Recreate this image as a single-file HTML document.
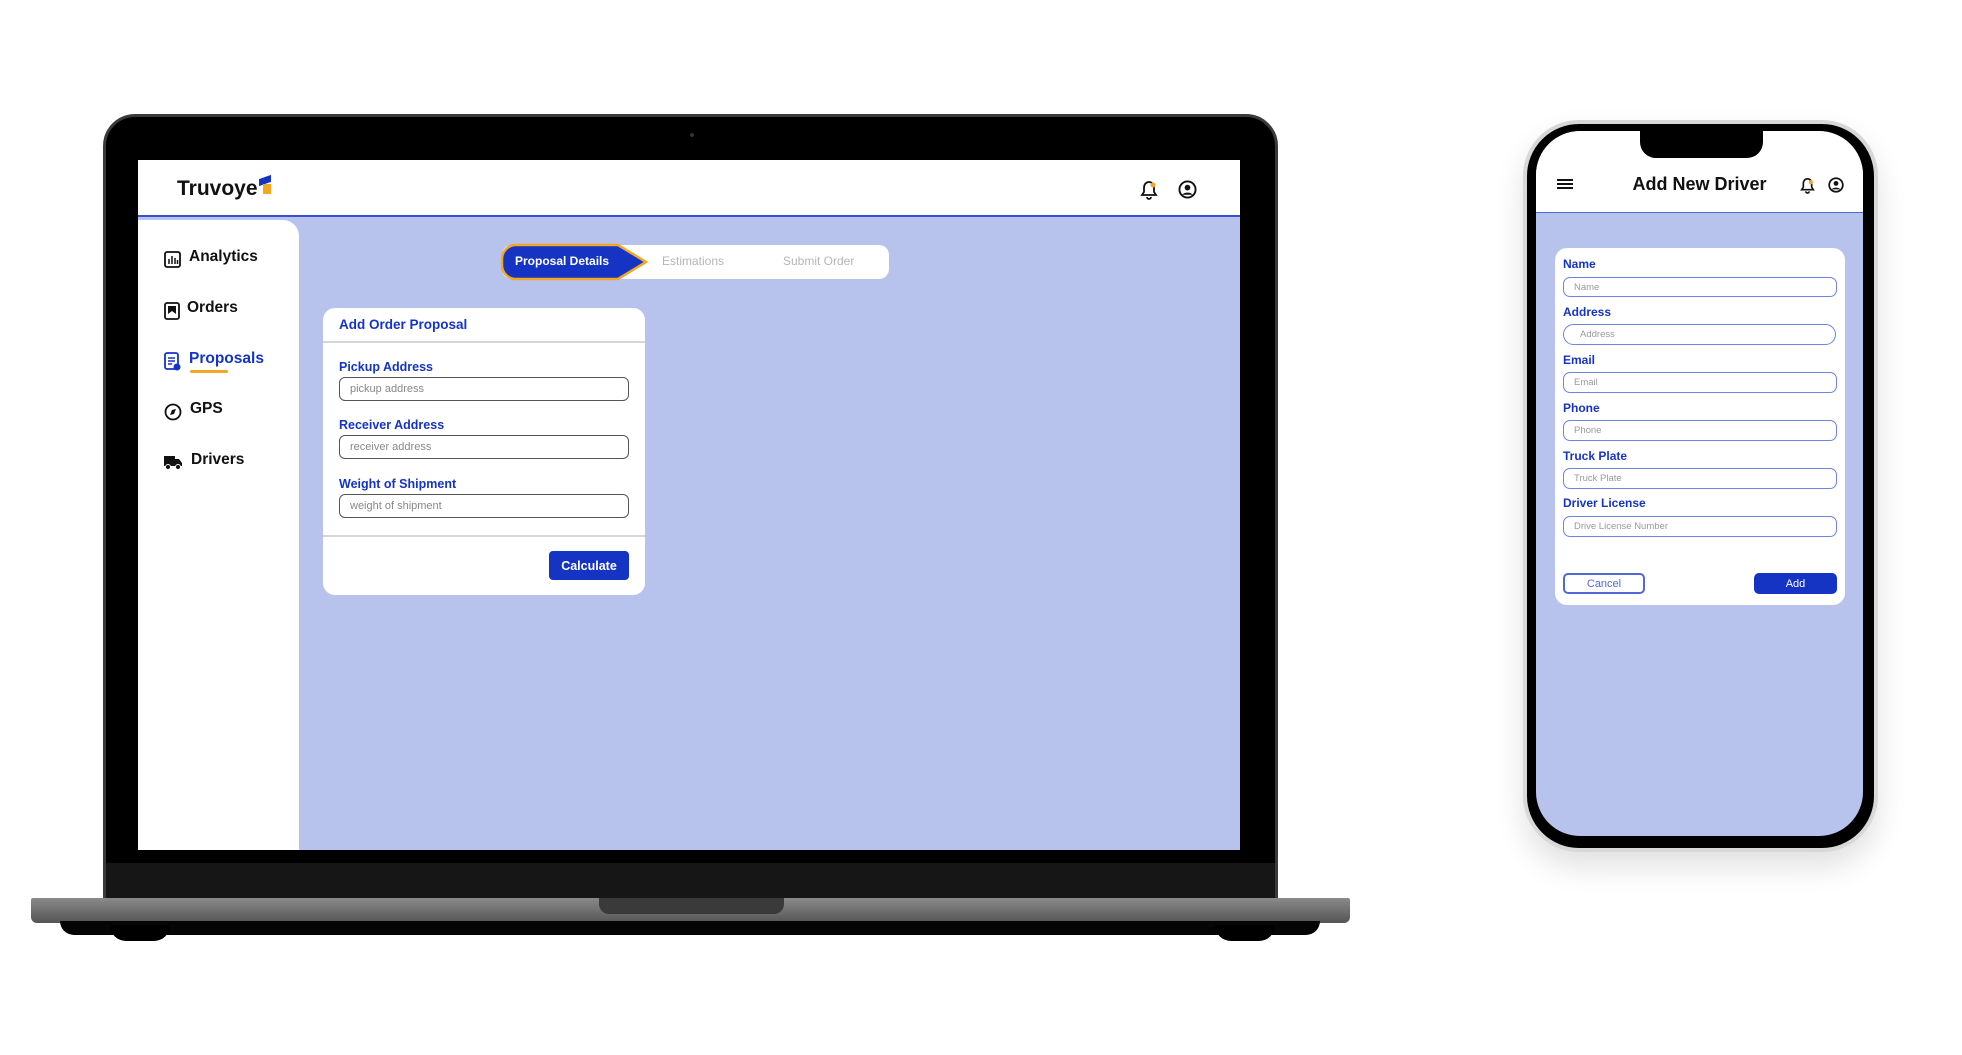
<!DOCTYPE html>
<html><head><meta charset="utf-8"><style>
*{box-sizing:border-box;margin:0;padding:0}
body{width:1962px;height:1055px;background:#fff;position:relative;overflow:hidden;font-family:"Liberation Sans",sans-serif}
.a{position:absolute}
.lbl{color:#1534c4;font-weight:bold;font-size:12.5px}
.inp{border:1.5px solid #555;border-radius:6px;font-size:11px;color:#888;padding-left:10px;display:flex;align-items:center;background:#fff}
.pl{color:#1534c4;font-weight:bold;font-size:12px}
.pi{border:1.5px solid #6f83e0;border-radius:7px;font-size:9.5px;color:#999;padding-left:10px;display:flex;align-items:center;background:#fff}
.nav{font-size:15.5px;font-weight:bold;color:#111}
</style></head><body>
<!-- laptop -->
<div class="a" style="left:103px;top:114px;width:1175px;height:795px;background:#000;border-radius:32px 32px 0 0;border:3px solid #3a3a3a"></div>
<div class="a" style="left:106px;top:863px;width:1169px;height:35px;background:#161616"></div>
<div class="a" style="left:690px;top:133px;width:4px;height:4px;border-radius:50%;background:#333"></div>
<div class="a" style="left:31px;top:898px;width:1319px;height:25px;background:linear-gradient(#8a8a8a,#6a6a6a 60%,#555);border-radius:2px 2px 6px 6px"></div>
<div class="a" style="left:599px;top:898px;width:185px;height:16px;background:#3a3a3a;border-radius:0 0 10px 10px"></div>
<div class="a" style="left:60px;top:921px;width:1260px;height:14px;background:#050505;border-radius:0 0 30px 30px"></div>
<div class="a" style="left:110px;top:925px;width:60px;height:16px;background:#000;border-radius:0 0 30px 30px"></div>
<div class="a" style="left:1215px;top:925px;width:60px;height:16px;background:#000;border-radius:0 0 30px 30px"></div>
<!-- screen -->
<div class="a" style="left:138px;top:160px;width:1102px;height:690px;background:#b7c3ec;overflow:hidden">
  <div class="a" style="left:0;top:0;width:1102px;height:57px;background:#fff;border-bottom:2px solid #3550d0"></div>
  <div class="a" style="left:39px;top:17px;font-size:21px;font-weight:bold;color:#111;white-space:nowrap">Truvoye<span style="display:inline-block;position:relative;width:14px;height:16px;vertical-align:top"><span style="position:absolute;left:1px;top:0;width:12px;height:7px;background:#1534c4;transform:skewY(-20deg)"></span><span style="position:absolute;left:5px;top:7px;width:8px;height:10px;background:#f5a623"></span></span></div>
  <svg class="a" style="left:1002px;top:20px" width="18" height="20" viewBox="0 0 18 20"><path d="M9 2c-3 0-5 2.5-5 5.5V12l-2 3h14l-2-3V7.5C14 4.5 12 2 9 2zM7 17a2 2 0 0 0 4 0" fill="none" stroke="#111" stroke-width="1.8"/><circle cx="13" cy="5" r="2.5" fill="#f5a623"/></svg>
  <svg class="a" style="left:1040px;top:20px" width="19" height="19" viewBox="0 0 20 20"><circle cx="10" cy="10" r="8.5" fill="none" stroke="#111" stroke-width="2"/><circle cx="10" cy="8" r="3" fill="#111"/><path d="M4.5 15.5c2-3 9-3 11 0" fill="#111"/></svg>
  <div class="a" style="left:0;top:60px;width:161px;height:640px;background:#fff;border-radius:0 16px 0 0"></div>
  <svg class="a" style="left:26px;top:91px" width="17" height="17"><rect x="1" y="1" width="15" height="15" rx="2" fill="none" stroke="#111" stroke-width="1.8"/><path d="M5 13V8M8 13V5M11 13V7M13.5 13V9" stroke="#111" stroke-width="1.5"/></svg>
  <div class="a nav" style="left:51px;top:88px">Analytics</div>
  <svg class="a" style="left:26px;top:142px" width="16" height="18"><rect x="1" y="1" width="14" height="16" rx="2" fill="none" stroke="#111" stroke-width="1.8"/><path d="M4 4h8v8l-4-3-4 3z" fill="#111"/></svg>
  <div class="a nav" style="left:49px;top:139px">Orders</div>
  <svg class="a" style="left:26px;top:192px" width="17" height="19"><rect x="1" y="1" width="13" height="16" rx="2" fill="none" stroke="#1534c4" stroke-width="1.8"/><path d="M4 6h7M4 9h7M4 12h4" stroke="#1534c4" stroke-width="1.5"/><circle cx="13" cy="15" r="3.5" fill="#1534c4"/></svg>
  <div class="a nav" style="left:51px;top:190px;color:#1534c4">Proposals</div>
  <div class="a" style="left:52px;top:210px;width:38px;height:3px;background:#f5a623;border-radius:2px"></div>
  <svg class="a" style="left:26px;top:243px" width="18" height="18"><circle cx="9" cy="9" r="7.5" fill="none" stroke="#111" stroke-width="1.8"/><path d="M12 6l-2 5-4 1 2-5z" fill="#111"/></svg>
  <div class="a nav" style="left:52px;top:240px">GPS</div>
  <svg class="a" style="left:26px;top:294px" width="19" height="16"><rect x="0" y="2" width="11" height="10" fill="#111"/><path d="M11 5h4l3 4v3h-7z" fill="#111"/><circle cx="4" cy="13" r="2.5" fill="#111" stroke="#fff"/><circle cx="14" cy="13" r="2.5" fill="#111" stroke="#fff"/></svg>
  <div class="a nav" style="left:53px;top:291px">Drivers</div>
  <!-- stepper -->
  <div class="a" style="left:364px;top:85px;width:387px;height:34px;background:#fff;border-radius:10px"></div>
  <svg class="a" style="left:362px;top:83px" width="150" height="38"><path d="M16 2H118L146 19L118 36H16A14 14 0 0 1 2 22V16A14 14 0 0 1 16 2Z" fill="#1534c4" stroke="#f5a623" stroke-width="2.5"/></svg>
  <div class="a" style="left:377px;top:94px;color:#fff;font-size:12px;font-weight:bold">Proposal Details</div>
  <div class="a" style="left:524px;top:94px;color:#b5b5b5;font-size:12px">Estimations</div>
  <div class="a" style="left:645px;top:94px;color:#b5b5b5;font-size:12px">Submit Order</div>
  <!-- card -->
  <div class="a" style="left:185px;top:148px;width:322px;height:287px;background:#fff;border-radius:12px"></div>
  <div class="a" style="left:185px;top:181px;width:322px;height:2px;background:#d6d6d6"></div>
  <div class="a" style="left:201px;top:157px;color:#1534c4;font-weight:bold;font-size:13.5px">Add Order Proposal</div>
  <div class="a lbl" style="left:201px;top:200px">Pickup Address</div>
  <div class="a inp" style="left:201px;top:217px;width:290px;height:24px">pickup address</div>
  <div class="a lbl" style="left:201px;top:258px">Receiver Address</div>
  <div class="a inp" style="left:201px;top:275px;width:290px;height:24px">receiver address</div>
  <div class="a lbl" style="left:201px;top:317px">Weight of Shipment</div>
  <div class="a inp" style="left:201px;top:334px;width:290px;height:24px">weight of shipment</div>
  <div class="a" style="left:185px;top:375px;width:322px;height:2px;background:#d6d6d6"></div>
  <div class="a" style="left:411px;top:391px;width:80px;height:29px;background:#1534c4;border-radius:4px;color:#fff;font-weight:bold;font-size:12.5px;display:flex;align-items:center;justify-content:center">Calculate</div>
</div>
<!-- phone -->
<div class="a" style="left:1523px;top:120px;width:355px;height:732px;background:#000;border-radius:56px;border:4px solid #d8d8d8;box-shadow:0 15px 30px rgba(0,0,0,.12)"></div>
<div class="a" style="left:1536px;top:131px;width:327px;height:705px;background:#b7c3ec;border-radius:44px;overflow:hidden">
  <div class="a" style="left:0;top:0;width:327px;height:82px;background:#fff;border-bottom:1.5px solid #5068d8"></div>
  <div class="a" style="left:104px;top:0;width:123px;height:27px;background:#000;border-radius:0 0 16px 16px"></div>
  <div class="a" style="left:21px;top:48px;width:16px;height:2px;background:#111;box-shadow:0 4px 0 #111,0 8px 0 #111"></div>
  <div class="a" style="left:0;top:43px;width:327px;text-align:center;font-size:18px;font-weight:bold;color:#111">Add New Driver</div>
  <svg class="a" style="left:264px;top:46px" width="15" height="17" viewBox="0 0 18 20"><path d="M9 2c-3 0-5 2.5-5 5.5V12l-2 3h14l-2-3V7.5C14 4.5 12 2 9 2zM7 17a2 2 0 0 0 4 0" fill="none" stroke="#111" stroke-width="2"/><circle cx="13" cy="6" r="2.5" fill="#f5a623"/></svg>
  <svg class="a" style="left:292px;top:46px" width="16" height="16" viewBox="0 0 20 20"><circle cx="10" cy="10" r="8.5" fill="none" stroke="#111" stroke-width="2.2"/><circle cx="10" cy="8" r="3" fill="#111"/><path d="M4.5 15.5c2-3 9-3 11 0" fill="#111"/></svg>
  <div class="a" style="left:19px;top:117px;width:290px;height:357px;background:#fff;border-radius:12px"></div>
  <div class="a pl" style="left:27px;top:126px">Name</div>
  <div class="a pi" style="left:27px;top:146px;width:274px;height:20px">Name</div>
  <div class="a pl" style="left:27px;top:174px">Address</div>
  <div class="a pi" style="left:27px;top:193px;width:273px;height:21px;border-radius:12px;padding-left:16px">Address</div>
  <div class="a pl" style="left:27px;top:222px">Email</div>
  <div class="a pi" style="left:27px;top:241px;width:274px;height:21px">Email</div>
  <div class="a pl" style="left:27px;top:270px">Phone</div>
  <div class="a pi" style="left:27px;top:289px;width:274px;height:21px">Phone</div>
  <div class="a pl" style="left:27px;top:318px">Truck Plate</div>
  <div class="a pi" style="left:27px;top:337px;width:274px;height:21px">Truck Plate</div>
  <div class="a pl" style="left:27px;top:365px">Driver License</div>
  <div class="a pi" style="left:27px;top:385px;width:274px;height:21px">Drive License Number</div>
  <div class="a" style="left:27px;top:442px;width:82px;height:21px;border:2px solid #5068d8;border-radius:5px;color:#5068d8;font-size:11px;display:flex;align-items:center;justify-content:center">Cancel</div>
  <div class="a" style="left:218px;top:442px;width:83px;height:21px;background:#1534c4;border-radius:5px;color:#fff;font-size:11px;display:flex;align-items:center;justify-content:center">Add</div>
</div>
</body></html>
